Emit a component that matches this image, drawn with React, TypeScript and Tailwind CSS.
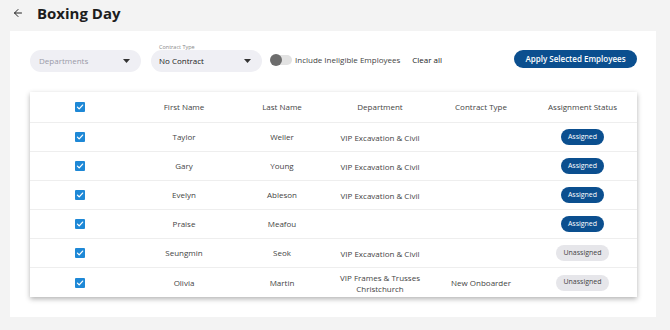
import React from 'react';
import { ArrowLeft } from 'lucide-react';

type Row = {
  first: string;
  last: string;
  dept: string[];
  contract: string;
  assigned: boolean;
};

const rows: Row[] = [
  { first: 'Taylor', last: 'Weller', dept: ['VIP Excavation & Civil'], contract: '', assigned: true },
  { first: 'Gary', last: 'Young', dept: ['VIP Excavation & Civil'], contract: '', assigned: true },
  { first: 'Evelyn', last: 'Ableson', dept: ['VIP Excavation & Civil'], contract: '', assigned: true },
  { first: 'Praise', last: 'Meafou', dept: [], contract: '', assigned: true },
  { first: 'Seungmin', last: 'Seok', dept: ['VIP Excavation & Civil'], contract: '', assigned: false },
  { first: 'Olivia', last: 'Martin', dept: ['VIP Frames & Trusses', 'Christchurch'], contract: 'New Onboarder', assigned: false },
];

const Check = () => (
  <span className="w-[10px] h-[10px] rounded-[1px] bg-[#1e88d6] flex items-center justify-center">
    <svg width="8" height="8" viewBox="0 0 10 10" fill="none">
      <path d="M1.8 5.2 L4 7.3 L8.3 2.6" stroke="white" strokeWidth="1.6" strokeLinecap="round" strokeLinejoin="round" />
    </svg>
  </span>
);

const Caret = () => (
  <svg width="7" height="4" viewBox="0 0 7 4">
    <path d="M0 0 H7 L3.5 4 Z" fill="#333" />
  </svg>
);

// column widths: checkbox, first, last, dept, contract, status
const cols = ['w-[100px]', 'w-[108px]', 'w-[88px]', 'w-[108px]', 'w-[94px]', 'w-[109px]'];

export default function App() {
  return (
    <div className="w-[670px] h-[330px] bg-[#f3f3f3] text-[#333] overflow-hidden" style={{ fontFamily: '"Open Sans", "Liberation Sans", sans-serif' }}>
      <div className="flex items-center h-[26px] pl-[12px]">
        <ArrowLeft size={12} strokeWidth={2} className="text-[#222]" />
        <h1 className="ml-[13px] text-[15px] font-bold text-[#1d1d1d]">Boxing Day</h1>
      </div>

      <div className="ml-[10px] mt-[5px] w-[646px] h-[286px] bg-white pt-[13px] pl-[20px]">
        {/* filters */}
        <div className="flex items-start">
          <div className="pt-[6px]">
            <div className="w-[111px] h-[22px] rounded-full bg-[#efeff4] flex items-center justify-between pl-[9px] pr-[11px]">
              <span className="text-[8px] text-[#9a9aa8]">Departments</span>
              <Caret />
            </div>
          </div>
          <div className="ml-[10px] flex flex-col">
            <span className="ml-[8px] text-[5.5px] leading-[6px] text-[#888]">Contract Type</span>
            <div className="w-[111px] h-[22px] rounded-full bg-[#efeff4] flex items-center justify-between pl-[8px] pr-[11px]">
              <span className="text-[8px] text-[#222]">No Contract</span>
              <Caret />
            </div>
          </div>
          <div className="ml-[9px] mt-[9px] flex items-center h-[14px]">
            <div className="relative w-[21px] h-[10px] rounded-full bg-[#e2e2e2]">
              <span className="absolute -left-[1px] -top-[1px] w-[12px] h-[12px] rounded-full bg-[#6d6d6d]" />
            </div>
            <span className="ml-[3px] text-[8px] text-[#444]">Include Ineligible Employees</span>
            <span className="ml-[12px] text-[8px] text-[#222]">Clear all</span>
          </div>
          <button className="ml-auto mr-[19px] mt-[6px] w-[123px] h-[18px] rounded-full bg-[#0b4f8f] text-white text-[8px] font-semibold flex items-center justify-center">
            Apply Selected Employees
          </button>
        </div>

        {/* table */}
        <div className="mt-[20px] w-[607px] bg-white shadow-[0_2px_5px_rgba(0,0,0,0.3)]">
          <div className="flex h-[31px] items-center border-b border-[#eeeeee] text-[8px] text-[#444]">
            <div className={`${cols[0]} flex justify-center`}><Check /></div>
            <div className={`${cols[1]} text-center`}>First Name</div>
            <div className={`${cols[2]} text-center`}>Last Name</div>
            <div className={`${cols[3]} text-center`}>Department</div>
            <div className={`${cols[4]} text-center`}>Contract Type</div>
            <div className={`${cols[5]} text-center`}>Assignment Status</div>
          </div>
          {rows.map((r, i) => (
            <div key={i} className={`flex h-[29px] items-center text-[8px] text-[#444] ${i < rows.length - 1 ? 'border-b border-[#eeeeee]' : ''}`}>
              <div className={`${cols[0]} flex justify-center`}><Check /></div>
              <div className={`${cols[1]} text-center`}>{r.first}</div>
              <div className={`${cols[2]} text-center`}>{r.last}</div>
              <div className={`${cols[3]} text-center leading-[11px]`}>
                {r.dept.map((d, j) => <div key={j}>{d}</div>)}
              </div>
              <div className={`${cols[4]} text-center`}>{r.contract}</div>
              <div className={`${cols[5]} flex justify-center`}>
                {r.assigned ? (
                  <span className="h-[16px] px-[7px] rounded-full bg-[#0b4f8f] text-white text-[7px] flex items-center">Assigned</span>
                ) : (
                  <span className="h-[16px] px-[7px] rounded-full bg-[#e6e6ea] text-[#444] text-[7px] flex items-center">Unassigned</span>
                )}
              </div>
            </div>
          ))}
        </div>
      </div>
    </div>
  );
}
